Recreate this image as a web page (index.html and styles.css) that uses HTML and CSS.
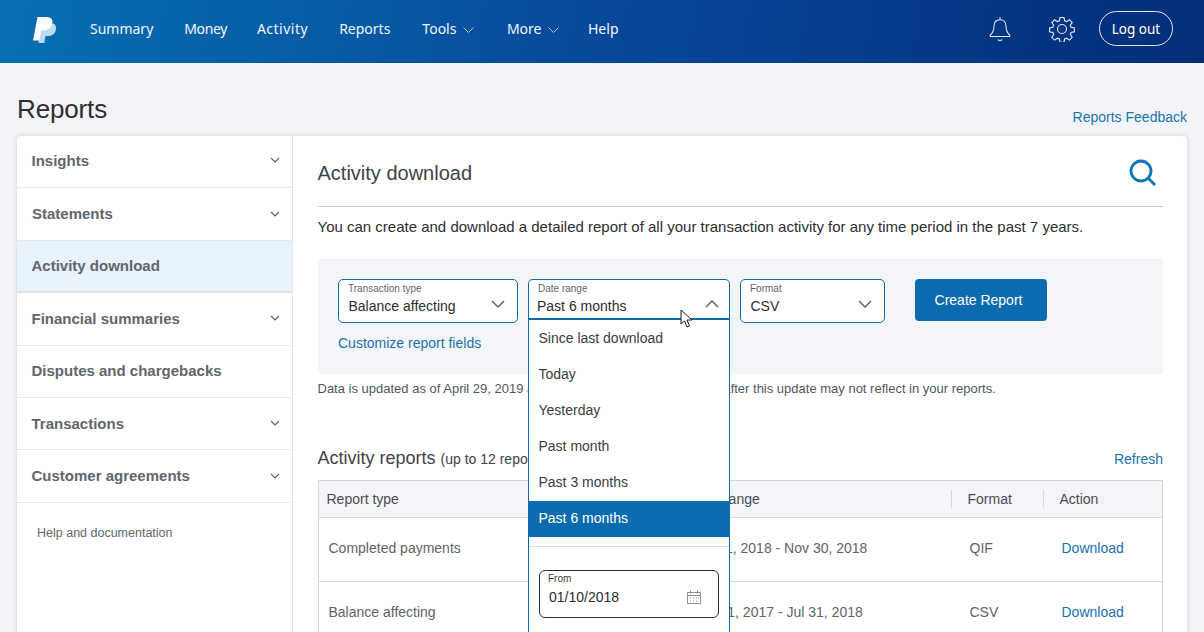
FILE: index.html
```html
<!DOCTYPE html>
<html lang="en">
<head>
<meta charset="utf-8">
<title>Reports</title>
<link rel="stylesheet" href="styles.css">
</head>
<body>
<header class="topbar">
  <svg class="logo" viewBox="0 0 24 28" width="24" height="28"><path class="logo-back" d="M8 7h9c4 0 6.500 2 6 6-.6 4.500-3.500 7-8 7h-2.500l-1.100 7H5.500z"/><path class="logo-front" d="M4.500 1h8.500c4.500 0 7 2 6.300 6-.8 5-4 7.500-9 7.500H8L6.500 24.500H0z"/></svg>
  <nav class="nav">
    <a class="nav-summary">Summary</a><a class="nav-money">Money</a><a class="nav-activity">Activity</a><a class="nav-reports">Reports</a>
    <a class="has-caret nav-tools">Tools <svg class="caret" viewBox="0 0 11 6" width="11" height="6"><path d="M.5.5l5 5 5-5"/></svg></a>
    <a class="has-caret nav-more">More <svg class="caret" viewBox="0 0 11 6" width="11" height="6"><path d="M.5.5l5 5 5-5"/></svg></a>
    <a>Help</a>
  </nav>
  <div class="top-actions">
    <svg class="top-icon" viewBox="0 0 24 28" width="24" height="26"><path d="M12 1v3M12 4c-4.500 0-6.500 3-6.500 7 0 4.500-1 7-4 9.500v1.500h21v-1.500c-3-2.500-4-5-4-9.500 0-4-2-7-6.500-7zM9.500 25.500c1.500 1 3.500 1 5 0"/></svg>
    <svg class="top-icon gear" viewBox="0 0 26 26" width="26" height="26"><circle cx="13" cy="13" r="4.500"/><path d="M11 1.500h4l.6 3.300 2 .8 2.800-1.900 2.800 2.800-1.900 2.800.8 2 3.300.6v4l-3.300.6-.8 2 1.900 2.800-2.800 2.800-2.800-1.900-2 .8-.6 3.300h-4l-.6-3.300-2-.8-2.800 1.900-2.800-2.800 1.900-2.800-.8-2-3.300-.6v-4l3.300-.6.8-2-1.900-2.800 2.800-2.800 2.800 1.900 2-.8z"/></svg>
    <a class="logout">Log out</a>
  </div>
</header>

<main class="page">
  <div class="title-row">
    <h1>Reports</h1>
    <a class="link feedback">Reports Feedback</a>
  </div>
  <section class="card">
    <aside class="sidebar">
      <div class="side-item side-first">Insights<svg class="chev" viewBox="0 0 10 6" width="10" height="6"><path d="M1 1l4 4 4-4"/></svg></div>
      <div class="side-item side-statements">Statements<svg class="chev" viewBox="0 0 10 6" width="10" height="6"><path d="M1 1l4 4 4-4"/></svg></div>
      <div class="side-item active">Activity download</div>
      <div class="side-item">Financial summaries<svg class="chev" viewBox="0 0 10 6" width="10" height="6"><path d="M1 1l4 4 4-4"/></svg></div>
      <div class="side-item">Disputes and chargebacks</div>
      <div class="side-item">Transactions<svg class="chev" viewBox="0 0 10 6" width="10" height="6"><path d="M1 1l4 4 4-4"/></svg></div>
      <div class="side-item">Customer agreements<svg class="chev" viewBox="0 0 10 6" width="10" height="6"><path d="M1 1l4 4 4-4"/></svg></div>
      <div class="side-help">Help and documentation</div>
    </aside>
    <div class="content">
      <div class="content-head">
        <h2>Activity download</h2>
        <svg class="search" viewBox="0 0 28 28" width="28" height="28"><circle cx="12" cy="12" r="10"/><path d="M19 19l7 7"/></svg>
      </div>
      <p class="intro">You can create and download a detailed report of all your transaction activity for any time period in the past 7 years.</p>
      <div class="panel">
        <div class="fields">
          <div class="field f-type"><span class="f-label">Transaction type</span><span class="f-value">Balance affecting</span><svg class="f-chev" viewBox="0 0 14 8" width="14" height="8"><path d="M1 1l6 6 6-6"/></svg></div>
          <div class="date-wrap">
            <div class="field f-date"><span class="f-label">Date range</span><span class="f-value">Past 6 months</span><svg class="f-chev" viewBox="0 0 14 8" width="14" height="8"><path d="M1 7l6-6 6 6"/></svg></div>
            <div class="menu">
              <div class="opt">Since last download</div>
              <div class="opt">Today</div>
              <div class="opt">Yesterday</div>
              <div class="opt">Past month</div>
              <div class="opt">Past 3 months</div>
              <div class="opt selected">Past 6 months</div>
              <div class="from-wrap">
                <div class="from"><span class="from-label">From</span><span class="from-value">01/10/2018</span>
                  <svg class="cal" viewBox="0 0 14 14" width="14" height="14"><path d="M.5 2.500h13v11H.5zM.5 5.500h13M3.500.5v3M10.500.5v3"/><path class="dots" d="M3 8h1M6 8h1M9 8h1M11 8h1M3 11h1M6 11h1M9 11h1"/></svg>
                </div>
              </div>
            </div>
          </div>
          <div class="field f-format"><span class="f-label">Format</span><span class="f-value">CSV</span><svg class="f-chev" viewBox="0 0 14 8" width="14" height="8"><path d="M1 1l6 6 6-6"/></svg></div>
          <button class="create">Create Report</button>
        </div>
        <a class="link customize">Customize report fields</a>
      </div>
      <p class="note">Data is updated as of April 29, 2019 at 11:59 PM. Transactions posted after this update may not reflect in your reports.</p>
      <div class="reports-head">
        <h3>Activity reports <small>(up to 12 reports)</small></h3>
        <a class="link refresh">Refresh</a>
      </div>
      <div class="table">
        <div class="row head"><span>Report type</span><span class="sep">Date range</span><span class="sep">Format</span><span class="sep">Action</span></div>
        <div class="row"><span>Completed payments</span><span>Jun 1, 2018 - Nov 30, 2018</span><span>QIF</span><a class="dl">Download</a></div>
        <div class="row"><span>Balance affecting</span><span>Aug 1, 2017 - Jul 31, 2018</span><span>CSV</span><a class="dl">Download</a></div>
      </div>
    </div>
  </section>
</main>
<svg class="cursor" viewBox="0 0 14 20" width="14" height="20"><path d="M1 1v14l3.500-3 2.500 6 2.500-1-2.500-6H12z"/></svg>
</body>
</html>
```

FILE: styles.css
```css
* { box-sizing: border-box; }
html, body { margin: 0; height: 632px; overflow: hidden; }
body { background: #f3f4f9; font-family: "Liberation Sans", Arial, sans-serif; color: #2c2e2f; position: relative; }
h1, h2, h3, p { margin: 0; font-weight: 400; }
.link { color: #1a73ab; }

.topbar { height: 63px; display: flex; align-items: center; padding: 0 31px 6px 33px; background: linear-gradient(100deg, #0670b3 0%, #07489a 50%, #042d78 100%); }
.logo { flex: none; margin-right: 33px; margin-top: 2px; }
.logo-back { fill: #b9dcf2; }
.logo-front { fill: #fff; }
.nav { display: flex; gap: 30px; font: 14px "Noto Sans", sans-serif; color: #f2f7fb; }
.nav-summary { margin-right: 1px; }
.nav-money { letter-spacing: -.4px; }
.nav-activity { letter-spacing: .5px; margin-right: 1px; }
.nav-reports { margin-right: 2px; }
.nav-tools { margin-right: 3px; }
.nav-more { margin-right: -1px; }
.has-caret { display: flex; align-items: center; gap: 6.500px; }
.caret { fill: none; stroke: #a9c8e4; stroke-width: 1; margin-top: 2px; }
.top-actions { margin-left: auto; display: flex; align-items: center; }
.top-icon { fill: none; stroke: #e6eef8; stroke-width: 1.1; margin-right: 37px; }
.gear { margin-right: 24px; }
.logout { width: 74px; height: 35px; border: 1px solid #dfe8f4; border-radius: 18px; display: flex; align-items: center; justify-content: center; font: 13.5px "Noto Sans", sans-serif; color: #fff; }

.page { padding: 0 17px; }
.title-row { height: 73px; display: flex; justify-content: space-between; align-items: flex-end; }
h1 { font-size: 26px; line-height: 30px; letter-spacing: -.15px; color: #2c2e2f; margin-bottom: 12px; }
.feedback { font-size: 14px; margin-bottom: 11px; }
.card { display: flex; background: #fff; border-radius: 4px; box-shadow: 0 0 5px rgba(110,120,140,.3); height: 560px; }
.sidebar { width: 276px; flex: none; border-right: 1px solid #e3e5e8; }
.side-item { height: 52.4px; border-bottom: 1px solid #e6e7ea; padding: 0 12px 1px 14.500px; display: flex; align-items: center; justify-content: space-between; font-weight: 700; font-size: 15px; color: #62666b; }
.side-first { padding-bottom: 3px; }
.side-statements { padding-left: 15px; }
.active { background: #e7f2fa; border-bottom: 2px solid #dfe3e8; }
.chev { fill: none; stroke: #5a5e63; stroke-width: 1.1; }
.side-help { padding: 23px 20px; font-size: 12.5px; color: #62666b; }

.content { flex: 1; padding: 0 24px 0 24.500px; min-width: 0; }
.content-head { height: 71px; border-bottom: 1px solid #c9ccd0; display: flex; align-items: center; justify-content: space-between; padding: 4px 6px 0 0; }
h2 { font-size: 20px; color: #3f4347; }
.search { fill: none; stroke: #0f74b4; stroke-width: 2.800; }
.intro { font-size: 15px; line-height: 20px; margin-top: 10px; color: #2c2e2f; }
.panel { background: #f4f5f9; height: 115px; margin-top: 22px; padding: 20px 20.500px 0; }
.fields { display: flex; align-items: flex-start; gap: 10px; }
.field { position: relative; height: 44px; border: 1px solid #0a6cae; border-radius: 5px; background: #fff; }
.f-type { width: 180px; }
.date-wrap { position: relative; width: 202px; }
.f-date { width: 202px; height: 42px; border-bottom: 3px solid #0a6cae; border-radius: 5px 5px 0 0; }
.f-format { width: 145px; }
.f-label { position: absolute; left: 9px; top: 3px; font-size: 10px; line-height: 12px; color: #62666b; }
.f-value { position: absolute; left: 9.500px; top: 16.500px; font-size: 14px; line-height: 18px; color: #2c2e2f; }
.f-date .f-value { left: 8px; top: 17px; }
.f-chev { position: absolute; right: 12px; top: 20px; fill: none; stroke: #62666b; stroke-width: 1.500; }
.f-date .f-chev { right: 10px; }
.menu { position: absolute; z-index: 2; left: 0; top: 41px; width: 202px; height: 320px; background: #fff; border: 1px solid #0a6cae; border-top: 0; }
.opt { height: 36px; padding-left: 9.500px; display: flex; align-items: center; font-size: 14px; color: #3a3d40; }
.selected { background: #0a6cae; color: #fff; margin-top: 1px; padding-bottom: 2px; }
.from-wrap { margin-top: 9px; border-top: 1px solid #dcdde0; padding: 23px 10px 0; }
.from { position: relative; height: 48px; border: 1px solid #2c2e2f; border-radius: 6px; }
.from-label { position: absolute; left: 8px; top: 2px; font-size: 10px; line-height: 12px; color: #3a3d40; }
.from-value { position: absolute; left: 9px; top: 17px; font-size: 14px; line-height: 18px; color: #2c2e2f; }
.cal { position: absolute; right: 17px; top: 19px; fill: none; stroke: #8a8d91; stroke-width: 1; }
.create { margin-left: 20px; width: 132px; height: 42px; border: 0; border-radius: 4px; padding: 0 5px 0 0; background: #0a6cae; color: #fff; font: 14px "Liberation Sans", Arial, sans-serif; }
.customize { display: block; font-size: 14px; line-height: 18px; margin-top: 11px; }
.note { font-size: 13px; line-height: 14px; margin-top: 8px; color: #53575b; }
.reports-head { display: flex; justify-content: space-between; align-items: baseline; margin-top: 52px; height: 30px; }
h3 { font-size: 18px; color: #3f4347; }
h3 small { font-size: 14px; }
.refresh { font-size: 14px; }
.table { border: 1px solid #d4d6da; border-bottom: 0; margin-top: 2px; }
.row { display: grid; grid-template-columns: 220px 421px 92px 1fr; height: 64px; align-items: center; border-bottom: 1px solid #d9dade; font-size: 14px; color: #5f6368; padding-bottom: 4px; }
.row > :nth-child(1) { padding-left: 10px; }
.row > :nth-child(2) { padding-left: 160px; }
.row > :nth-child(3) { padding-left: 10px; }
.head { height: 37px; padding-bottom: 0; background: #f4f5f9; color: #4a4d50; }
.head > :nth-child(1) { padding-left: 8px; }
.head > :nth-child(2) { padding-left: 152px; }
.head > :nth-child(3), .head > :nth-child(4) { padding-left: 8px; }
.sep { position: relative; }
.sep::before { content: ""; position: absolute; left: -9px; top: -1px; bottom: -1px; width: 1px; background: #d6d8dc; }
.dl { color: #1a6fb0; padding-left: 10px; }
.cursor { position: absolute; left: 680px; top: 309px; z-index: 5; fill: #fff; stroke: #1a1a1a; stroke-width: 1; }
```
